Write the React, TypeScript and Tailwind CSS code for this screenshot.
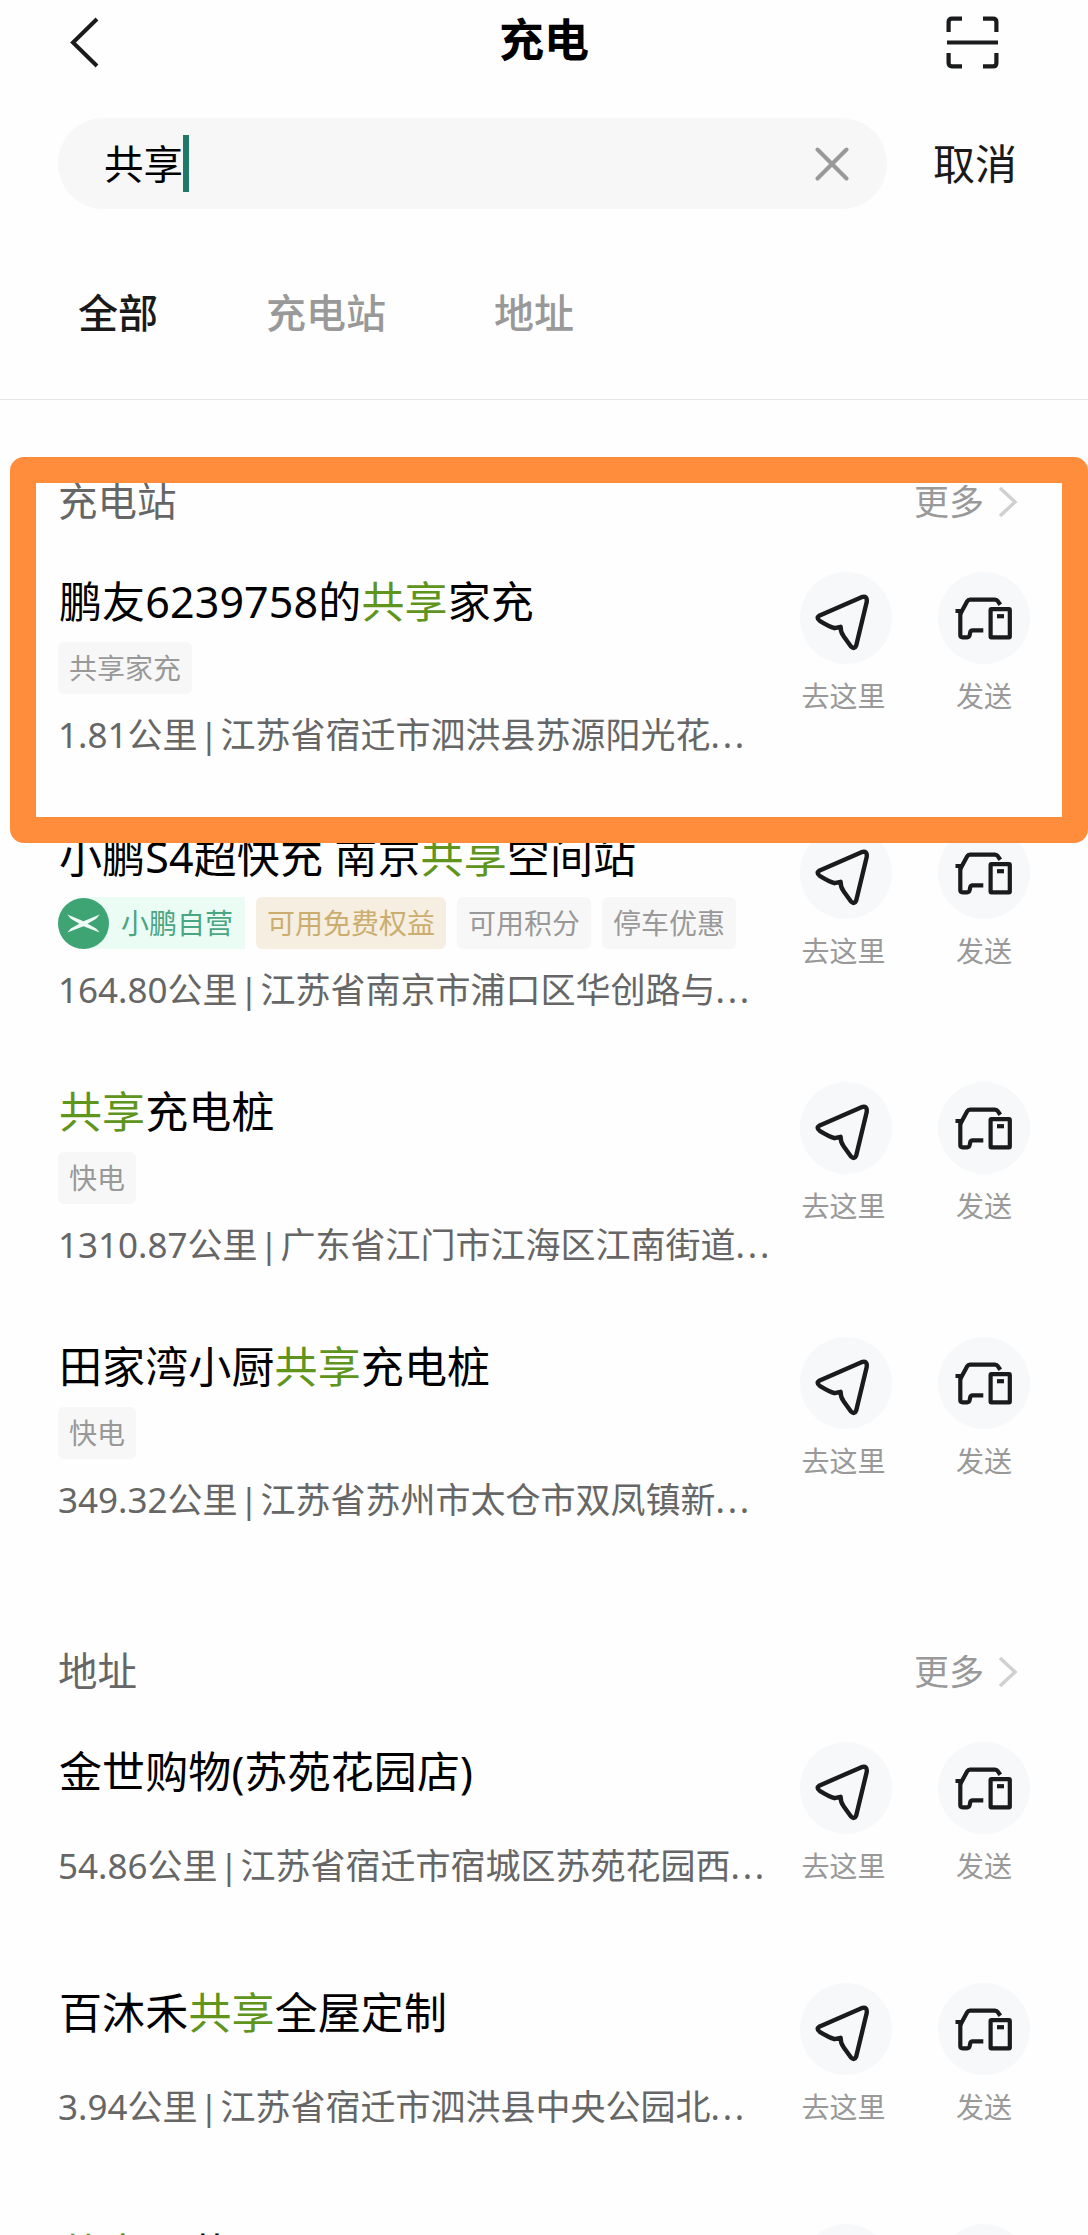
import React from "react";

interface Tag {
  label: string;
  kind: "plain" | "gold" | "brand";
}

interface Place {
  title: string;
  distance: string;
  address: string;
  tags?: Tag[];
}

const KEYWORD = "共享";

const stations: Place[] = [
  {
    title: "鹏友6239758的共享家充",
    distance: "1.81公里",
    address: "江苏省宿迁市泗洪县苏源阳光花",
    tags: [{ label: "共享家充", kind: "plain" }],
  },
  {
    title: "小鹏S4超快充 南京共享空间站",
    distance: "164.80公里",
    address: "江苏省南京市浦口区华创路与",
    tags: [
      { label: "小鹏自营", kind: "brand" },
      { label: "可用免费权益", kind: "gold" },
      { label: "可用积分", kind: "plain" },
      { label: "停车优惠", kind: "plain" },
    ],
  },
  {
    title: "共享充电桩",
    distance: "1310.87公里",
    address: "广东省江门市江海区江南街道",
    tags: [{ label: "快电", kind: "plain" }],
  },
  {
    title: "田家湾小厨共享充电桩",
    distance: "349.32公里",
    address: "江苏省苏州市太仓市双凤镇新",
    tags: [{ label: "快电", kind: "plain" }],
  },
];

const addresses: Place[] = [
  {
    title: "金世购物(苏苑花园店)",
    distance: "54.86公里",
    address: "江苏省宿迁市宿城区苏苑花园西",
  },
  {
    title: "百沐禾共享全屋定制",
    distance: "3.94公里",
    address: "江苏省宿迁市泗洪县中央公园北",
  },
  {
    title: "共享百花园",
    distance: "5.12公里",
    address: "江苏省宿迁市泗洪县",
  },
];

const NavigateIcon = () => (
  <svg width="92" height="92" viewBox="0 0 92 92" fill="none" stroke="#1a1b1c" strokeWidth="4.4" strokeLinejoin="round">
    <path d="M61.5 25.2L19.7 43.4Q15.6 46 19.7 48.8Q29 54.5 34.5 56.2L40.6 54.8Q40.6 60.5 43.6 64.2L51 74.5Q54.3 77.8 56.2 73.5L66.7 30Q67.5 23.3 61.5 25.2Z" />
  </svg>
);

const SendToCarIcon = () => (
  <svg width="92" height="92" viewBox="0 0 92 92" fill="none" stroke="#1a1b1c" strokeWidth="4.2">
    <path d="M17.5 39H24.2M22.3 42L29.2 29.2Q30.1 27.6 32 27.6H57Q58.8 27.6 59.8 29.2L62.3 32.8" />
    <path d="M22.3 39V63Q22.3 65.3 24.6 65.3H29.2Q31.3 65.3 31.7 63L32.2 60.4Q32.6 58.4 34.6 58.4H45.3" />
    <rect x="52.6" y="37.2" width="19.2" height="28.2" rx="0.8" />
    <path d="M59 44.2H66" />
  </svg>
);

const BrandMark = () => (
  <svg width="51" height="51" viewBox="0 0 51 51" className="shrink-0">
    <circle cx="25.5" cy="25.5" r="25.5" fill="#3fa473" />
    <path
      d="M9.3 16.6L25.5 23.3L41.7 16.6L38.2 20.8L29.6 25.8L38.2 30.4L41.7 34.6L25.5 28.2L9.3 34.6L12.8 30.4L21.4 25.8L12.8 20.8Z"
      fill="#eefaf4"
    />
  </svg>
);

const TagChip: React.FC<{ tag: Tag }> = ({ tag }) => {
  if (tag.kind === "brand") {
    return (
      <span className="flex h-[52px] w-[187px] items-center rounded-l-full rounded-r-[5px] bg-[#ebfcf5] text-[#4aa583]">
        <BrandMark />
        <span className="ml-3">{tag.label}</span>
      </span>
    );
  }
  if (tag.kind === "gold") {
    return <span className="h-[52px] rounded-[6px] bg-[#f6eee1] px-[11px] text-[#cbae6f]">{tag.label}</span>;
  }
  return <span className="h-[52px] rounded-[6px] bg-[#f7f7f7] px-[11px] text-[#999]">{tag.label}</span>;
};

// paints the searched keyword green inside a result title
const Highlighted: React.FC<{ text: string }> = ({ text }) => (
  <>
    {text.split(KEYWORD).map((part, i) => (
      <React.Fragment key={i}>
        {i > 0 && <span className="text-[#5f951c]">{KEYWORD}</span>}
        {part}
      </React.Fragment>
    ))}
  </>
);

const PlaceRow: React.FC<{ place: Place }> = ({ place }) => (
  <li className={place.tags ? "flex h-[255px] justify-between" : "flex h-[241px] justify-between"}>
    <div className="whitespace-nowrap">
      <h3 className="h-[60px] pl-px text-[43px] leading-[60px] tracking-[0.12px] text-black">
        <Highlighted text={place.title} />
      </h3>
      {place.tags && (
        <div className="mt-[10px] flex gap-[11px] text-[28px] leading-[52px]">
          {place.tags.map((tag) => (
            <TagChip key={tag.label} tag={tag} />
          ))}
        </div>
      )}
      <p
        className={
          place.tags
            ? "mt-4 text-[35px] leading-[50px] text-[#666]"
            : "mt-[39px] text-[35px] leading-[50px] text-[#666]"
        }
      >
        {place.distance}
        <span className="inline-block w-[23px] text-center">|</span>
        {place.address}
        <span className="tracking-[2.8px]">...</span>
      </p>
    </div>

    <div className="flex gap-[46px] text-[28px] leading-10 text-[#999]">
      <button className="flex w-[92px] flex-col items-center">
        <span className="rounded-full bg-[#f6f8fa]">
          <NavigateIcon />
        </span>
        <span className="mt-3 mr-[5px] whitespace-nowrap">去这里</span>
      </button>
      <button className="flex w-[92px] flex-col items-center">
        <span className="rounded-full bg-[#f6f8fa]">
          <SendToCarIcon />
        </span>
        <span className="mt-3">发送</span>
      </button>
    </div>
  </li>
);

const Section: React.FC<{ title: string; places: Place[] }> = ({ title, places }) => (
  <section>
    <div className="flex h-[60px] items-center justify-between">
      <h2 className="text-[39.5px] leading-[60px] text-[#666]">{title}</h2>
      <button className="mt-0.5 mr-[11px] flex items-center gap-[14px] text-[35px] leading-[60px] text-[#999]">
        更多
        <svg width="21" height="32" viewBox="0 0 21 32" fill="none" stroke="#d0d0d0" strokeWidth="3.5">
          <path d="M2 2L17 16L2 30" />
        </svg>
      </button>
    </div>
    <ul className="mt-[41px]">
      {places.map((place) => (
        <PlaceRow key={place.title} place={place} />
      ))}
    </ul>
  </section>
);

const App: React.FC = () => {
  return (
    <div className="relative h-[2235px] w-[1088px] overflow-hidden bg-[#fefefe] font-['Noto_Sans','Noto_Sans_CJK_SC',sans-serif]">
      <header className="flex h-[84px] items-center justify-between pr-[89px] pl-[69px]">
        <svg width="52" height="52" viewBox="0 0 52 52" fill="none" stroke="#1a1b1c" strokeWidth="4">
          <path d="M28 3L4 26.5L28 50" />
        </svg>
        <h1 className="mb-1 ml-[21px] text-[45px] leading-[80px] font-bold text-black">充电</h1>
        <svg width="53" height="53" viewBox="0 0 53 53" fill="none" stroke="#1a1b1c" strokeWidth="4.2">
          <path d="M2.6 16V6Q2.6 2.6 6 2.6H16M37 2.6H47Q50.4 2.6 50.4 6V16M50.4 37V47Q50.4 50.4 47 50.4H37M16 50.4H6Q2.6 50.4 2.6 47V37" />
          <path d="M1 26.5H52" />
        </svg>
      </header>

      <div className="mt-[34px] flex h-[91px] items-center pl-[58px]">
        <div className="flex h-full w-[829px] items-center rounded-full bg-[#f7f7f8] pr-[38px] pl-[46px]">
          <span className="text-[39.5px] leading-[60px] text-black">共享</span>
          <span className="h-[57px] w-[6px] bg-[#207a68]" />
          <svg width="34" height="34" viewBox="0 0 34 34" className="ml-auto" stroke="#999" strokeWidth="4" strokeLinecap="round">
            <path d="M2.5 2.5L31.5 31.5M31.5 2.5L2.5 31.5" />
          </svg>
        </div>
        <button className="ml-[46px] text-[42px] leading-[60px] text-[#1a1a1a]">取消</button>
      </div>

      <nav className="flex h-[191px] items-center gap-[108px] border-b border-[#e6e6e6] pt-[17px] pl-[78px] text-[40px] leading-[60px] font-medium text-[#999]">
        <span className="text-[#1a1a1a]">全部</span>
        <span>充电站</span>
        <span>地址</span>
      </nav>

      <main className="flex flex-col gap-[49px] pt-[71px] pr-[58px] pl-[58px]">
        <Section title="充电站" places={stations} />
        <Section title="地址" places={addresses} />
      </main>

      {/* marker frame around the first result */}
      <div className="absolute top-[457px] left-[10px] h-[386px] w-[1078px] rounded-[14px] border-[26px] border-[#ff8d3b]" />
    </div>
  );
};

export default App;
